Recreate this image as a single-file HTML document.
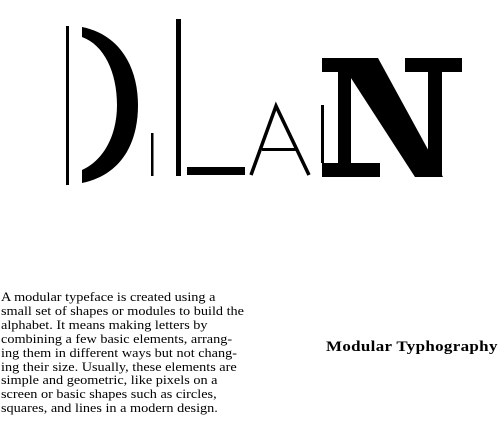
<!DOCTYPE html>
<html><head><meta charset="utf-8"><style>
html,body{margin:0;padding:0;background:#fff;width:502px;height:439px;overflow:hidden;position:relative}
.p{position:absolute;left:1px;top:291px;font-family:"Liberation Serif",serif;font-size:12.4px;line-height:13.9px;color:#000;white-space:nowrap;transform:scaleX(1.15);transform-origin:0 0}
.t{position:absolute;left:326px;top:339px;font-family:"Liberation Serif",serif;font-weight:bold;font-size:15px;letter-spacing:0.3px;white-space:nowrap;color:#000;transform:scaleX(1.13);transform-origin:0 0}
</style></head><body>
<svg width="502" height="439" style="position:absolute;left:0;top:0">
<rect x="66" y="26" width="3" height="159" fill="#000"/>
<path d="M82,27 C122,35 138,70 138,105 C138,145 120,175 82,183 L82,170 C104,160 117,135 117,105 C117,72 104,45 82,37 Z" fill="#000"/>
<rect x="151" y="133" width="2.5" height="43" fill="#000"/>
<rect x="176" y="19" width="5" height="157" fill="#000"/>
<rect x="187" y="167" width="58" height="8" fill="#000"/>
<path d="M251,175 L276,106 L309,175" fill="none" stroke="#000" stroke-width="3.5"/>
<rect x="262" y="148" width="34" height="3" fill="#000"/>
<rect x="321" y="105" width="3" height="58" fill="#000"/>
<rect x="322" y="58" width="48" height="14" fill="#000"/>
<rect x="322" y="163" width="58" height="14" fill="#000"/>
<rect x="338" y="58" width="13" height="119" fill="#000"/>
<polygon points="338,58 378,58 443,177 415,177" fill="#000"/>
<rect x="428" y="58" width="14" height="119" fill="#000"/>
<rect x="405" y="58" width="57" height="14" fill="#000"/>
</svg>
<div class="p">A modular typeface is created using a<br>small set of shapes or modules to build the<br>alphabet. It means making letters by<br>combining a few basic elements, arrang-<br>ing them in different ways but not chang-<br>ing their size. Usually, these elements are<br>simple and geometric, like pixels on a<br>screen or basic shapes such as circles,<br>squares, and lines in a modern design.</div>
<div class="t">Modular Typhography</div>
</body></html>
